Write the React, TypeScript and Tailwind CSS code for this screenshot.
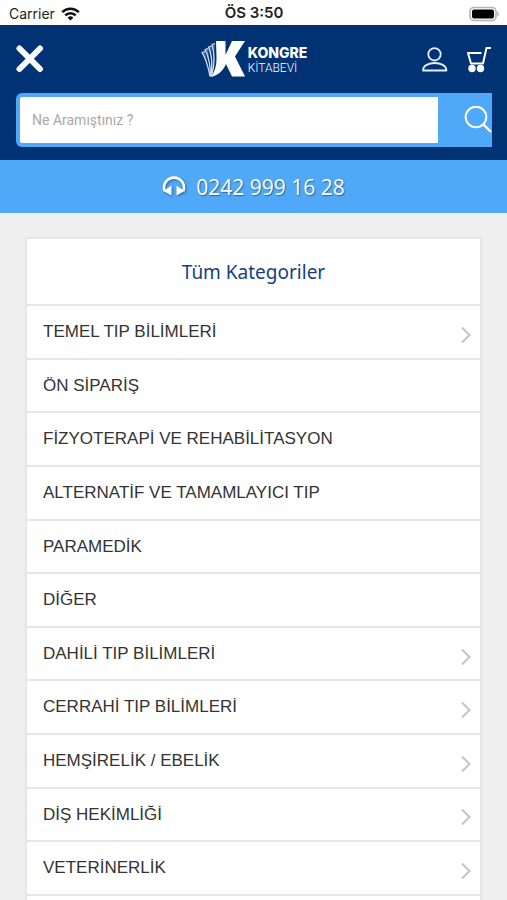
const categories = [
  { name: "TEMEL TIP BİLİMLERİ", nested: true },
  { name: "ÖN SİPARİŞ", nested: false },
  { name: "FİZYOTERAPİ VE REHABİLİTASYON", nested: false },
  { name: "ALTERNATİF VE TAMAMLAYICI TIP", nested: false },
  { name: "PARAMEDİK", nested: false },
  { name: "DİĞER", nested: false },
  { name: "DAHİLİ TIP BİLİMLERİ", nested: true },
  { name: "CERRAHİ TIP BİLİMLERİ", nested: true },
  { name: "HEMŞİRELİK / EBELİK", nested: true },
  { name: "DİŞ HEKİMLİĞİ", nested: true },
  { name: "VETERİNERLİK", nested: true },
];

function StatusBar() {
  return (
    <div className="grid h-[25px] shrink-0 grid-cols-3 items-center bg-white pt-[2px] pr-2 pl-[9px] font-['Inter',sans-serif] text-[14px] text-[#222]">
      <div className="flex items-center gap-1.5">
        <span>Carrier</span>
        <svg width="19" height="14" viewBox="0 0 19 14" fill="none" stroke="#111" strokeWidth="2.6">
          <path d="M1.2 5.2a11.8 11.8 0 0 1 16.6 0" />
          <path d="M4.3 8.4a7.4 7.4 0 0 1 10.4 0" />
          <path d="M9.5 13.6 6.6 10.7a4.1 4.1 0 0 1 5.8 0z" fill="#111" stroke="none" />
        </svg>
      </div>
      <span className="text-center text-[15px] font-semibold">ÖS 3:50</span>
      <svg className="justify-self-end" width="31" height="16" viewBox="0 0 31 16">
        <rect x="2" y="1.5" width="26" height="13" rx="4" fill="#fff" stroke="#b5b5b5" strokeWidth="1.6" />
        <rect x="4" y="3.5" width="22" height="9" rx="2" fill="#000" />
        <path d="M29.4 5.6c2 .8 2 4 0 4.8z" fill="#a8a8a8" />
      </svg>
    </div>
  );
}

function Logo() {
  return (
    <a href="#" className="flex items-center gap-[3px] text-white">
      <svg width="44" height="38" viewBox="0 0 44 38" fill="#fff">
        <path d="M15 1h9.5v14L31 1h13L34 16.5 44 36.5H31L25 24C22 31 17 35.5 10 37 13.5 32 15.5 26 15.5 18z" />
        <g fill="#cfdef3" fillOpacity="0.35" stroke="#cfdef3" strokeWidth="1.3" strokeLinejoin="round">
          <path d="M9 36.5C7.500 28 5 19 1 12.5l3-1" />
          <path d="M9.5 36.5C9.5 27 8 17 4 9.5l3-1" />
          <path d="M10 36C11.5 26 11 15 7.5 7l3-1" />
          <path d="M10.5 36C13.5 26 14 15 11 4.5l3-1" />
        </g>
      </svg>
      <span className="flex flex-col">
        <span className="font-['Inter',sans-serif] text-[14px] leading-[17px] font-extrabold">KONGRE</span>
        <span className="font-['Roboto',sans-serif] text-[12px] leading-[14px] font-light">KİTABEVİ</span>
      </span>
    </a>
  );
}

function Header() {
  return (
    <header className="shrink-0 bg-[#003274] pb-[13px] pl-4 pr-[15px]">
      <div className="grid h-[68px] grid-cols-[1fr_auto_1fr] items-center">
        <button type="button" aria-label="Menüyü kapat" className="justify-self-start">
          <svg width="28" height="28" viewBox="0 0 28 28" stroke="#fff" strokeWidth="6" strokeLinecap="round">
            <path d="M3.5 3.5 24 24M24 3.5 3.5 24" />
          </svg>
        </button>
        <Logo />
        <div className="flex items-center gap-[18px] justify-self-end">
          <a href="#" aria-label="Hesabım">
            <svg width="26" height="25" viewBox="0 0 26 25" fill="none" stroke="#e4efff" strokeWidth="1.8">
              <circle cx="12.5" cy="7.3" r="6.2" />
              <path d="M1 23.5c0-10 23.400-10 23.400 0z" strokeLinejoin="round" />
            </svg>
          </a>
          <a href="#" aria-label="Sepetim">
            <svg width="26" height="27" viewBox="0 0 26 27" fill="none" stroke="#fff" strokeWidth="2">
              <path d="M25 2h-4.5L17 17.5H5L2 7h13.500" strokeLinejoin="round" />
              <circle cx="6" cy="22.500" r="3.700" fill="#fff" stroke="none" />
              <circle cx="14.500" cy="22.500" r="3.700" fill="#fff" stroke="none" />
            </svg>
          </a>
        </div>
      </div>
      <form className="flex h-[54px] rounded-l-md border-4 border-r-0 border-[#4fa8f8] bg-[#4fa8f8]">
        <input
          type="text"
          aria-label="Ne Aramıştınız ?"
          placeholder="Ne Aramıştınız ?"
          className="min-w-0 flex-1 rounded-l-xs bg-white px-3 font-['Roboto',sans-serif] text-[14px] text-gray-700 outline-none placeholder:text-[#a9a9a9]"
        />
        <button type="submit" aria-label="Ara" className="flex w-[54px] items-center justify-end">
          <svg width="28" height="28" viewBox="0 0 28 28" fill="none" stroke="#fff" strokeWidth="2">
            <circle cx="12" cy="11" r="10.3" />
            <path d="M19.5 18.5 27 26" strokeWidth="2.4" />
          </svg>
        </button>
      </form>
    </header>
  );
}

function PhoneBar() {
  return (
    <a
      href="tel:02429991628"
      className="flex h-[53px] shrink-0 items-center justify-center gap-[10px] bg-[#4fa8f8] pt-[2px] font-['Open_Sans',sans-serif] text-[21px] text-white text-shadow-[1px_1px_1px_#00000066]"
    >
      <svg className="mb-1 drop-shadow-[1px_1px_1px_#00000066]" width="24" height="20" viewBox="0 0 24 20">
        <path d="M2.6 15A10 10 0 1 1 21.4 15" fill="none" stroke="#fff" strokeWidth="2.6" />
        <path d="M9.5 9.5v10L1.5 15zM14.5 9.5v10L22.5 15z" fill="#fff" />
      </svg>
      0242 999 16 28
    </a>
  );
}

export default function App() {
  return (
    <div className="flex h-screen flex-col overflow-hidden bg-[#efefef]">
      <StatusBar />
      <Header />
      <PhoneBar />
      <main className="flex min-h-0 flex-1 flex-col px-[25px] pt-6">
        <nav aria-labelledby="categories-title" className="flex-1 border-2 border-b-0 border-[#e6e6e6] bg-white">
          <h1
            id="categories-title"
            className="border-b-2 border-[#e6e6e6] pt-[19px] pb-[18px] text-center font-['Noto_Sans',sans-serif] text-[19px] leading-7 text-[#123f83]"
          >
            Tüm Kategoriler
          </h1>
          <ul>
            {categories.map((category) => (
              <li key={category.name} className="border-b-2 border-[#e6e6e6]">
                <a
                  href="#"
                  className="flex items-center justify-between py-3 pl-4 pr-2 font-['Liberation_Sans',sans-serif] text-[17px] leading-relaxed text-[#333]"
                >
                  {category.name}
                  {category.nested && (
                    <svg className="mt-1.5" width="12" height="18" viewBox="0 0 12 18" fill="none" stroke="#c4c4c4" strokeWidth="2">
                      <path d="M2 1.5 9.5 9 2 16.5" />
                    </svg>
                  )}
                </a>
              </li>
            ))}
          </ul>
        </nav>
      </main>
    </div>
  );
}
